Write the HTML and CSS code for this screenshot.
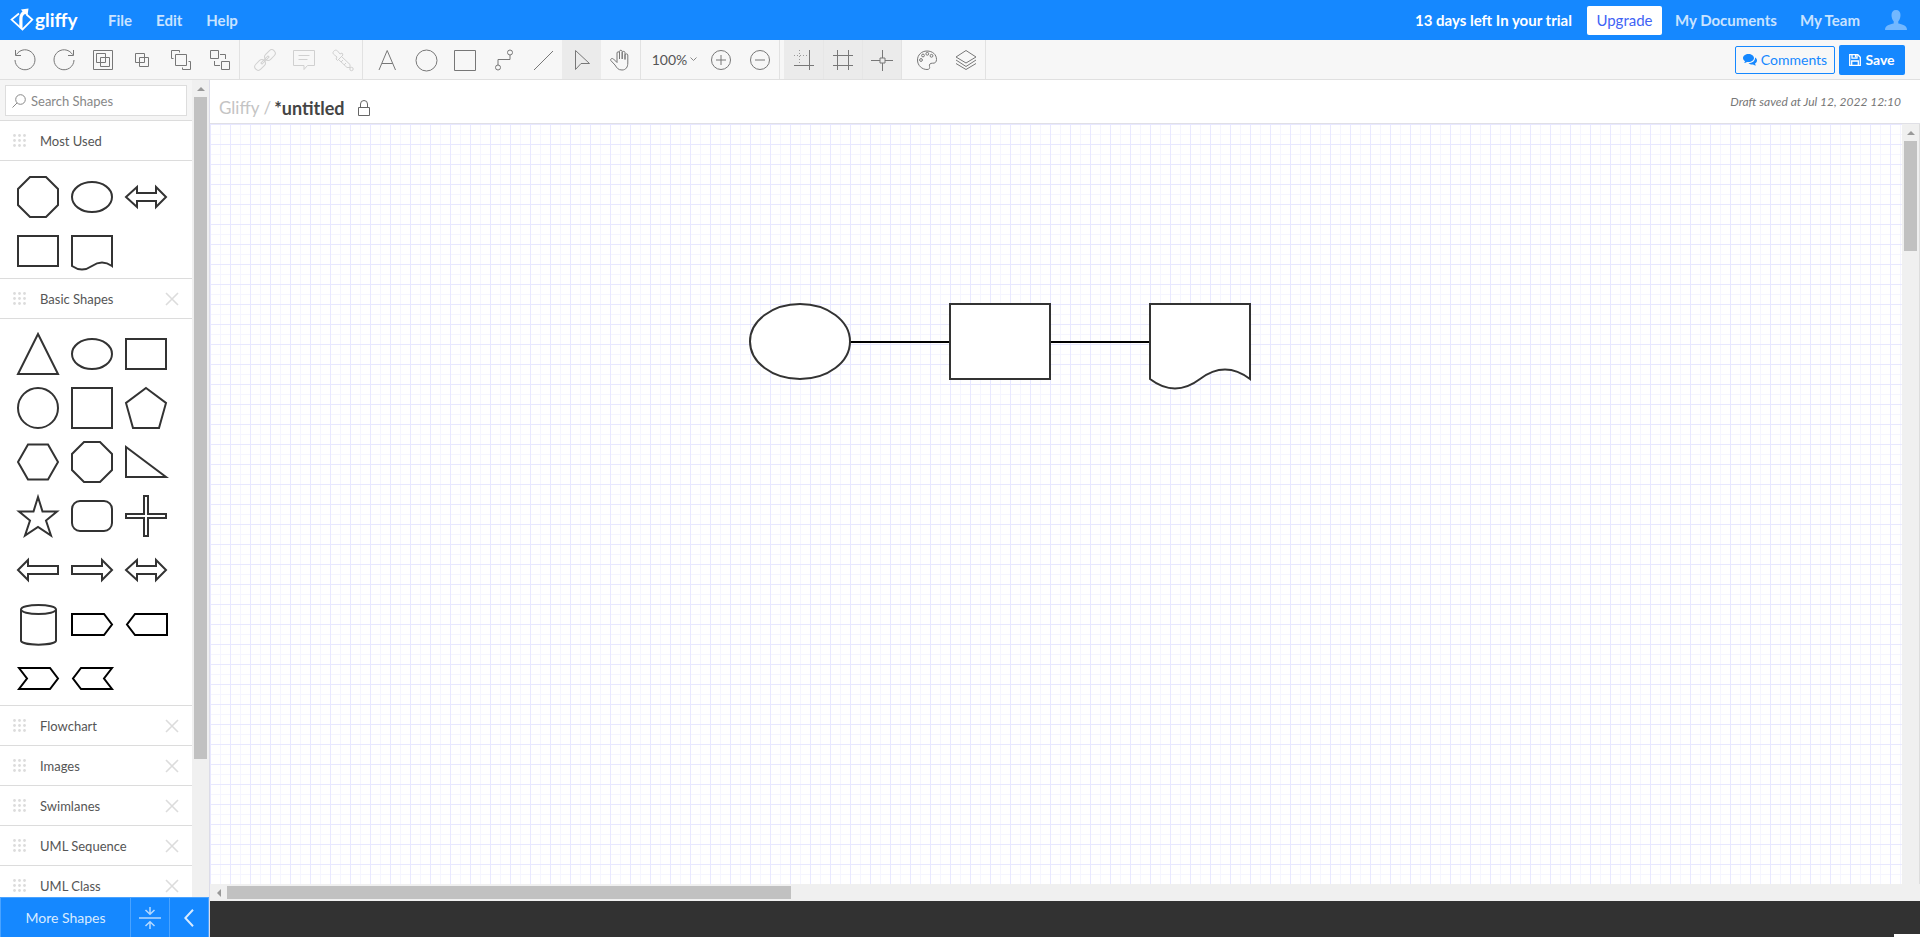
FILE: index.html
```html
<!DOCTYPE html>
<html lang="en">
<head>
<meta charset="utf-8">
<title>Gliffy - untitled</title>
<link rel="stylesheet" href="styles.css">
</head>
<body>
<svg class="sprite" aria-hidden="true">
  <symbol id="grip" viewBox="0 0 13 13"><g fill="#dcdcdc"><circle cx="1.5" cy="1.5" r="1.4"/><circle cx="6.5" cy="1.5" r="1.4"/><circle cx="11.5" cy="1.5" r="1.4"/><circle cx="1.5" cy="6.5" r="1.4"/><circle cx="6.5" cy="6.5" r="1.4"/><circle cx="11.5" cy="6.5" r="1.4"/><circle cx="1.5" cy="11.5" r="1.4"/><circle cx="6.5" cy="11.5" r="1.4"/><circle cx="11.5" cy="11.5" r="1.4"/></g></symbol>
  <symbol id="close" viewBox="0 0 14 14"><path d="M1 1L13 13M13 1L1 13" stroke="#dcdcdc" stroke-width="1.6" fill="none"/></symbol>
  <symbol id="octagon" viewBox="0 0 54 54"><path d="M19 7H35L47 19V35L35 47H19L7 35V19Z"/></symbol>
  <symbol id="ellipse" viewBox="0 0 54 54"><ellipse cx="27" cy="27" rx="20" ry="15"/></symbol>
  <symbol id="rect" viewBox="0 0 54 54"><path d="M7 12H47V42H7Z"/></symbol>
  <symbol id="double-arrow" viewBox="0 0 54 54"><path d="M7 27L18 17V23H37V17L47 27L37 37V31H18V37Z"/></symbol>
</svg>

<header class="topbar">
  <a class="logo" href="#">
    <svg width="24" height="24" viewBox="0 0 24 24" fill="none" stroke="#fff" stroke-width="1.8">
      <path d="M9 5.500L1.600 11.600L12.500 21.500L22.300 11.600L16.500 6.500"/>
      <path d="M12.500 22V11C12.500 8 13.500 7 15 6L17.500 7.500L18.500 0.500L11 1.500L12.500 3.500C10 5.500 9.300 8 9.300 11V19Z" fill="#fff" stroke="none"/>
    </svg>
    <span>gliffy</span>
  </a>
  <nav class="menu">
    <button>File</button>
    <button>Edit</button>
    <button>Help</button>
  </nav>
  <div class="account">
    <span class="trial">13 days left In your trial</span>
    <button class="upgrade">Upgrade</button>
    <a href="#" class="doc-link">My Documents</a>
    <a href="#" class="team-link">My Team</a>
    <button class="user" aria-label="Account">
      <svg width="22" height="20" viewBox="0 0 22 20" fill="#73b8ff"><path d="M11 0C14 0 15.500 2 15.500 5C15.500 8 14.500 10 13.300 11.300V13.500C17 14.500 22 15 22 20H0C0 15 5 14.500 8.700 13.500V11.300C7.500 10 6.500 8 6.500 5C6.500 2 8 0 11 0Z"/></svg>
    </button>
  </div>
</header>

<div class="toolbar">
  <div class="group">
    <button class="tool" aria-label="Undo"><svg width="24" height="24" viewBox="0 0 24 24"><path d="M3.500 6.500A10 10 0 1 1 2 12M2.500 2V7.500H8"/></svg></button>
    <button class="tool" aria-label="Redo"><svg width="24" height="24" viewBox="0 0 24 24"><path d="M20.500 6.500A10 10 0 1 0 22 12M21.500 2V7.500H16"/></svg></button>
    <button class="tool" aria-label="Group"><svg width="24" height="24" viewBox="0 0 24 24"><path d="M2.500 2.500H21.500V21.500H2.500ZM5.500 5.500H14.500V14.500H5.500ZM9.500 9.500H18.500V18.500H9.500Z"/></svg></button>
    <button class="tool" aria-label="Ungroup"><svg width="24" height="24" viewBox="0 0 24 24"><path d="M5.500 5.500H14.500V14.500H5.500ZM9.500 9.500H18.500V18.500H9.500Z"/></svg></button>
    <button class="tool" aria-label="Bring to front"><svg width="24" height="24" viewBox="0 0 24 24"><path d="M6.500 6.500H17.500V17.500H6.500ZM2.500 10.500V2.500H10.500V4.500M2.500 10.500H4.500M13.500 19.500V21.500H21.500V13.500H19.500"/></svg></button>
    <button class="tool" aria-label="Arrange"><svg width="24" height="24" viewBox="0 0 24 24"><path d="M2.500 2.500H10.500V10.500H2.500ZM13.500 13.500H21.500V21.500H13.500ZM12 6.500H17.500V11M6.500 13V17.500H12"/></svg></button>
  </div>
  <div class="group">
    <button class="tool off" aria-label="Link" disabled><svg width="24" height="24" viewBox="0 0 24 24"><g transform="rotate(-45 12 12)"><rect x="-1" y="8.500" width="12" height="7" rx="3.500"/><rect x="13" y="8.500" width="12" height="7" rx="3.500"/><path d="M7 11.200H17V12.800H7Z"/></g></svg></button>
    <button class="tool off" aria-label="Add note" disabled><svg width="24" height="24" viewBox="0 0 24 24"><path d="M1.500 2.500H22.500V17.500H15.500L12 21.500V17.500H1.500ZM6.500 7.500H17.500M6.500 11.500H15.500"/></svg></button>
    <button class="tool off" aria-label="Copy style" disabled><svg width="24" height="24" viewBox="0 0 24 24"><path d="M2.500 3.500C4 1.500 6 2 7 3.500L9 6L11 5L12 7L6.500 12.500L5 11L6 9L3.500 7C2 6 1.500 4.500 2.500 3.500ZM10.500 8.500L19 16.500V19.500H16L7.500 11.500M10 14L12 12M13 17L15 15"/><circle cx="20.500" cy="21" r="1.700"/></svg></button>
  </div>
  <div class="group draw">
    <button class="tool" aria-label="Text"><svg width="24" height="24" viewBox="0 0 24 24"><path d="M4 22L12.200 2.500L20.500 22M7 15.500H17.700"/></svg></button>
    <button class="tool" aria-label="Ellipse"><svg width="24" height="24" viewBox="0 0 24 24"><circle cx="12.500" cy="12.500" r="10.500"/></svg></button>
    <button class="tool" aria-label="Rectangle"><svg width="24" height="24" viewBox="0 0 24 24"><path d="M1.500 2.500H22.500V22.500H1.500Z"/></svg></button>
    <button class="tool" aria-label="Connector"><svg width="24" height="24" viewBox="0 0 24 24"><circle cx="6" cy="19.500" r="2.500"/><circle cx="18" cy="4.500" r="2.500"/><path d="M6 17V11.500H18V7"/></svg></button>
    <button class="tool" aria-label="Line"><svg width="24" height="24" viewBox="0 0 24 24"><path d="M3 22L22 3"/></svg></button>
    <button class="tool on" aria-label="Pointer"><svg width="24" height="24" viewBox="0 0 24 24"><path d="M5.500 2.500V21.500L11 15.500H19.500Z"/></svg></button>
    <button class="tool" aria-label="Pan"><svg width="24" height="24" viewBox="0 0 24 24"><path d="M8 12V5C8 3.300 10.500 3.300 10.500 5V11V3.500C10.500 1.800 13.200 1.800 13.200 3.500V11V4.500C13.200 3 16 3 16 4.500V11.500V7C16 5.500 18.800 5.500 18.800 7V15C18.800 19 17 22 13 22C9 22 8 20 6 17L1.800 12.500C1 11 3 9.800 4.500 11L8 14.500Z"/></svg></button>
  </div>
  <div class="group">
    <button class="zoom">100%<svg width="7" height="5" viewBox="0 0 7 5"><path d="M.5 .5L3.500 3.500L6.500 .5" fill="none" stroke="#888"/></svg></button>
    <button class="tool" aria-label="Zoom in"><svg width="24" height="24" viewBox="0 0 24 24"><circle cx="12" cy="12" r="9.500"/><path d="M7 12H17M12 7V17"/></svg></button>
    <button class="tool" aria-label="Zoom out"><svg width="24" height="24" viewBox="0 0 24 24"><circle cx="12" cy="12" r="9.500"/><path d="M7 12H17"/></svg></button>
  </div>
  <div class="group snaps">
    <button class="tool on" aria-label="Snap to grid"><svg width="24" height="24" viewBox="0 0 24 24"><path d="M2 17.500H22M17.500 2V22"/><path d="M2 7.500H16M7.500 2V16" stroke="#999" stroke-dasharray="1 2"/></svg></button>
    <button class="tool on" aria-label="Show grid"><svg width="24" height="24" viewBox="0 0 24 24"><path d="M2 7.500H22M2 17.500H22M6.500 2V22M17.500 2V22"/></svg></button>
    <button class="tool on" aria-label="Guides"><svg width="24" height="24" viewBox="0 0 24 24"><path d="M1 12.500H10M15 12.500H23M12.500 2V10M12.500 15V23M10 10H15V15H10Z"/></svg></button>
  </div>
  <div class="group">
    <button class="tool" aria-label="Theme"><svg width="24" height="24" viewBox="0 0 24 24"><path d="M12 3C6.500 3 2.500 7 2.500 12C2.500 17.500 7 21.500 12 21.500C14.500 21.500 15 20 14.500 18.500C14 16.500 15 15 17.500 15.200C20 15.500 21.500 14 21.500 11.500C21.500 6.500 17.500 3 12 3Z"/><circle cx="6" cy="12" r="1.400"/><circle cx="8" cy="7.500" r="1.400"/><circle cx="12.300" cy="5.800" r="1.400"/><circle cx="16.500" cy="7.800" r="1.400"/></svg></button>
    <button class="tool" aria-label="Layers"><svg width="24" height="24" viewBox="0 0 24 24"><path d="M12 2.500L22 9L12 15L2 9ZM2 12L12 18.500L22 12M2 15.500L12 21.500L22 15.500"/></svg></button>
  </div>
  <div class="actions">
    <button class="comments"><svg width="14" height="12" viewBox="0 0 14 12" fill="#1588ff"><path d="M5.500 0C8.500 0 11 1.700 11 4C11 6.300 8.500 8 5.500 8C5 8 4.500 8 4 7.900C3 8.700 2 9 1 9C1.500 8.500 1.900 7.900 2 7.200C.8 6.500 0 5.300 0 4C0 1.700 2.500 0 5.500 0Z"/><path d="M12 3.500C13.200 4.200 14 5.200 14 6.500C14 7.800 13.200 8.900 12 9.600C12.100 10.300 12.500 11 13 11.500C12 11.500 11 11 10 10.400C8.500 10.600 6.800 10.300 5.500 9.200C9 9.200 12.500 7 12 3.500Z"/></svg>Comments</button>
    <button class="save"><svg width="12" height="12" viewBox="0 0 12 12" fill="none" stroke="#fff" stroke-width="1.300"><path d="M.7 .7H8.800L11.300 3.200V11.300H.7Z"/><path d="M3 .7V4.200H8V.7M2.700 11V7H9.300V11"/><path d="M6.500 1V3.500"/></svg>Save</button>
  </div>
</div>

<main class="main">
  <aside class="sidebar">
    <div class="palette">
      <div class="sections">
        <div class="search"><label class="search-box"><svg width="14" height="14" viewBox="0 0 14 14" fill="none" stroke="#888"><circle cx="8.500" cy="5.500" r="4.800"/><path d="M5 9L.5 13.500"/></svg><input type="text" placeholder="Search Shapes" aria-label="Search Shapes"></label></div>

        <div class="head"><svg class="grip"><use href="#grip"/></svg><h2>Most Used</h2></div>
        <div class="shapes recent">
          <svg><use href="#octagon"/></svg>
          <svg><use href="#ellipse"/></svg>
          <svg><use href="#double-arrow"/></svg>
          <svg><use href="#rect"/></svg>
          <svg viewBox="0 0 54 54"><path d="M7 42V12H47V42Q37 35 27 42Q17 49 7 42Z"/></svg>
        </div>

        <div class="head"><svg class="grip"><use href="#grip"/></svg><h2>Basic Shapes</h2><button aria-label="Remove Basic Shapes"><svg class="close"><use href="#close"/></svg></button></div>
        <div class="shapes">
          <svg viewBox="0 0 54 54"><path d="M27 7L47 47H7Z"/></svg>
          <svg><use href="#ellipse"/></svg>
          <svg><use href="#rect"/></svg>
          <svg viewBox="0 0 54 54"><circle cx="27" cy="27" r="20"/></svg>
          <svg viewBox="0 0 54 54"><path d="M7 7H47V47H7Z"/></svg>
          <svg viewBox="0 0 54 54"><path d="M27 7L47 22L40 47H14L7 22Z"/></svg>
          <svg viewBox="0 0 54 54"><path d="M17 9.500H37L47 27L37 44.500H17L7 27Z"/></svg>
          <svg><use href="#octagon"/></svg>
          <svg viewBox="0 0 54 54"><path d="M7 12V42H47Z"/></svg>
          <svg viewBox="0 0 54 54"><path d="M27 8L31.500 22.500H46L35 31.500L40 46.500L27 38L14 46.500L19 31.500L8 22.500H22.500Z"/></svg>
          <svg viewBox="0 0 54 54"><rect x="7" y="12" width="40" height="30" rx="8"/></svg>
          <svg viewBox="0 0 54 54"><path d="M25 7H29V25H47V29H29V47H25V29H7V25H25Z"/></svg>
          <svg viewBox="0 0 54 54"><path d="M7 27L17 17V23H47V31H17V37Z"/></svg>
          <svg viewBox="0 0 54 54"><path d="M47 27L37 17V23H7V31H37V37Z"/></svg>
          <svg><use href="#double-arrow"/></svg>
          <svg viewBox="0 0 54 54"><path d="M10 12.500V43.500C10 49 45 49 45 43.500V12.500"/><ellipse cx="27.500" cy="12.500" rx="17.500" ry="4.500"/></svg>
          <svg class="black" viewBox="0 0 54 54"><path d="M7 17H39L47 27.500L39 38H7Z"/></svg>
          <svg class="black" viewBox="0 0 54 54"><path d="M48 17H16L8 27.500L16 38H48Z"/></svg>
          <svg class="black" viewBox="0 0 54 54"><path d="M8 17H39L47 27.500L39 38H8L16 27.500Z"/></svg>
          <svg class="black" viewBox="0 0 54 54"><path d="M47 17H16L8 27.500L16 38H47L39 27.500Z"/></svg>
        </div>

        <div class="head"><svg class="grip"><use href="#grip"/></svg><h2>Flowchart</h2><button aria-label="Remove Flowchart"><svg class="close"><use href="#close"/></svg></button></div>
        <div class="head"><svg class="grip"><use href="#grip"/></svg><h2>Images</h2><button aria-label="Remove Images"><svg class="close"><use href="#close"/></svg></button></div>
        <div class="head"><svg class="grip"><use href="#grip"/></svg><h2>Swimlanes</h2><button aria-label="Remove Swimlanes"><svg class="close"><use href="#close"/></svg></button></div>
        <div class="head"><svg class="grip"><use href="#grip"/></svg><h2>UML Sequence</h2><button aria-label="Remove UML Sequence"><svg class="close"><use href="#close"/></svg></button></div>
        <div class="head"><svg class="grip"><use href="#grip"/></svg><h2>UML Class</h2><button aria-label="Remove UML Class"><svg class="close"><use href="#close"/></svg></button></div>
      </div>
      <div class="vbar"><span class="up"></span><span class="thumb palette-thumb"></span></div>
    </div>
    <div class="side-foot">
      <button class="more">More Shapes</button>
      <button class="fold" aria-label="Collapse sections"><svg width="22" height="22" viewBox="0 0 22 22" fill="none" stroke="#b5d9ff" stroke-width="1.500"><path d="M0 11H22M11 0V7M6.500 3L11 7.300L15.500 3M11 22V15M6.500 19L11 14.700L15.500 19"/></svg></button>
      <button class="hide" aria-label="Hide panel"><svg width="10" height="18" viewBox="0 0 10 18" fill="none" stroke="#d8ebff" stroke-width="2"><path d="M9 .7L1.300 9L9 17.300"/></svg></button>
    </div>
  </aside>

  <section class="workspace">
    <div class="titlebar">
      <span class="crumb">Gliffy /</span>
      <h1>*untitled</h1>
      <svg width="12" height="16" viewBox="0 0 12 16" fill="none" stroke="#666"><path d="M.5 7.500H11.500V15.500H.5ZM2.500 7V4A3.500 3.500 0 0 1 9.500 4V7"/></svg>
      <em class="draft">Draft saved at Jul 12, 2022 12:10</em>
    </div>
    <div class="stage">
      <svg class="canvas" role="img" aria-label="Diagram">
        <defs><pattern id="grid" width="20" height="20" patternUnits="userSpaceOnUse"><path d="M10.500 0V20M0 10.500H20" stroke="#f5f5ff"/><path d="M.5 0V20M0 .5H20" stroke="#e8e8ff"/></pattern></defs>
        <rect width="100%" height="100%" fill="url(#grid)"/>
        <g fill="#fff" stroke="#333" stroke-width="2">
          <path d="M640 218H740M840 218H940" stroke="#000"/>
          <ellipse cx="590" cy="217.500" rx="50" ry="37.500"/>
          <path d="M740 180H840V255H740Z"/>
          <path d="M940 255V180H1040V255Q1015 236 990 255Q965 274 940 255Z"/>
        </g>
      </svg>
      <div class="vbar"><span class="up"></span><span class="thumb canvas-thumb"></span></div>
    </div>
    <div class="hbar"><span class="left"></span><span class="hthumb"></span></div>
    <footer class="tabs"><span class="corner"></span></footer>
  </section>
</main>
</body>
</html>
```
FILE: styles.css
```css
* { box-sizing: border-box; }
body {
  margin: 0;
  height: 100vh;
  display: flex;
  flex-direction: column;
  overflow: hidden;
  font-family: Lato, "Liberation Sans", sans-serif;
  font-size: 14px;
  color: #555;
  background: #fff;
}
button { font: inherit; color: inherit; background: none; border: 0; padding: 0; margin: 0; }
a { color: inherit; text-decoration: none; }
h1, h2 { margin: 0; font-weight: normal; }
svg { flex: none; display: block; }
.sprite { position: absolute; width: 0; height: 0; }

.topbar {
  flex: none;
  height: 40px;
  display: flex;
  align-items: center;
  padding: 0 13px 0 10px;
  background: #1588ff;
  color: #c9e3ff;
  font-size: 15px;
  font-weight: bold;
}
.logo { display: flex; align-items: center; gap: 1px; width: 98px; color: #fff; font-size: 19px; line-height: 24px; }
.menu { display: flex; gap: 24px; }
.account { margin-left: auto; display: flex; align-items: center; }
.trial { color: #fff; margin-right: 15px; }
.upgrade {
  width: 75px;
  height: 29px;
  margin-right: 13px;
  background: #fff;
  color: #3f63f5;
  font-weight: normal;
  border-radius: 2px;
}
.doc-link { margin-right: 23px; }
.team-link { margin-right: 25px; }

.toolbar {
  flex: none;
  height: 40px;
  display: flex;
  background: #f7f7f7;
  border-bottom: 1px solid #e0e0e0;
}
.group { display: flex; padding-left: 5px; border-right: 1px solid #e2e2e2; }
.tool { width: 39px; display: grid; place-items: center; }
.tool svg { fill: none; stroke: #777; stroke-width: 1; }
.tool.off svg { stroke: #d0d0d0; }
.tool.on { background: #ebebeb; }
.draw { padding-left: 4px; }
.snaps { padding-left: 4px; }
.snaps .tool + .tool { border-left: 1px solid #e6e6e6; }
.zoom { width: 55px; display: flex; align-items: center; justify-content: center; gap: 3px; padding-left: 2px; }
.actions { margin-left: auto; display: flex; align-items: center; gap: 4px; padding-right: 15px; }
.comments, .save { display: flex; align-items: center; justify-content: center; gap: 4px; border-radius: 2px; }
.comments { width: 100px; height: 28px; border: 1px solid #1588ff; color: #1588ff; }
.save { width: 66px; height: 30px; background: #1588ff; color: #fff; font-weight: bold; }

.main { flex: 1; min-height: 0; display: flex; }
.sidebar { width: 210px; flex: none; display: flex; flex-direction: column; border-right: 1px solid #dcdce8; font-size: 13px; }
.palette { flex: 1; min-height: 0; display: flex; overflow: hidden; }
.sections { flex: 1; min-width: 0; }
.search { height: 41px; padding: 5px; background: #f5f5f5; border-bottom: 1px solid #dcdcdc; }
.search-box { height: 31px; display: flex; align-items: center; gap: 5px; padding-left: 6px; background: #fff; border: 1px solid #ddd; }
.search input { flex: 1; min-width: 0; border: 0; outline: 0; padding: 0; background: none; font: inherit; color: #555; }
.search input::placeholder { color: #888; opacity: 1; }
.head { height: 40px; display: flex; align-items: center; padding: 0 13px; border-bottom: 1px solid #dcdcdc; }
.head h2 { flex: 1; margin-left: 14px; font-size: 13px; line-height: 20px; }
.grip { width: 13px; height: 13px; }
.close { width: 14px; height: 14px; }
.shapes { display: grid; grid-template-columns: repeat(3, 54px); padding: 8px 0 0 11px; border-bottom: 1px solid #dcdcdc; }
.shapes.recent { padding-top: 9px; }
.shapes svg { width: 54px; height: 54px; fill: #fff; stroke: #333; stroke-width: 2; }
.shapes .black { stroke: #000; }

.vbar { flex: none; width: 17px; display: flex; flex-direction: column; padding: 0 2px; background: #f0f0f0; }
.up { height: 17px; flex: none; display: grid; place-items: center; }
.up::before { content: ""; border: 4px solid transparent; border-top: 0; border-bottom: 4px solid #999; }
.thumb { display: block; background: #c1c1c1; }
.palette-thumb { height: 81%; }
.canvas-thumb { height: 110px; }

.side-foot { flex: none; height: 40px; display: flex; background: #1588ff; color: #d8ebff; border: 1px solid #4aa3ff; border-bottom: 0; font-size: 14px; }
.side-foot button { display: grid; place-items: center; }
.more { flex: 1; }
.fold, .hide { width: 39px; }
.side-foot .fold, .side-foot .hide { border-left: 1px solid #4aa3ff; }

.workspace { flex: 1; min-width: 0; display: flex; flex-direction: column; }
.titlebar { flex: none; height: 44px; display: flex; align-items: center; padding: 12px 19px 0 9px; border-bottom: 1px solid #e0e0e6; }
.crumb { font-size: 17px; line-height: 22px; color: #c4c4c4; margin-right: 3px; }
.titlebar h1 { font-size: 18px; line-height: 22px; font-weight: bold; color: #444; margin-right: 13px; }
.draft { margin: 0 0 12px auto; font-size: 12px; line-height: 16px; color: #777; }
.stage { flex: 1; min-height: 0; display: flex; border-right: 1px solid #ddd; }
.canvas { flex: 1; min-width: 0; height: 100%; }
.hbar { flex: none; height: 17px; display: flex; padding: 2px 0; background: #f0f0f0; }
.left { width: 17px; display: grid; place-items: center; }
.left::before { content: ""; border: 4px solid transparent; border-left: 0; border-right: 4px solid #999; }
.hthumb { width: 33%; background: #c1c1c1; }
.tabs { flex: none; height: 36px; display: flex; align-items: flex-end; justify-content: flex-end; background: #323232; }
.corner { width: 26px; height: 3px; background: #fff; }
```
